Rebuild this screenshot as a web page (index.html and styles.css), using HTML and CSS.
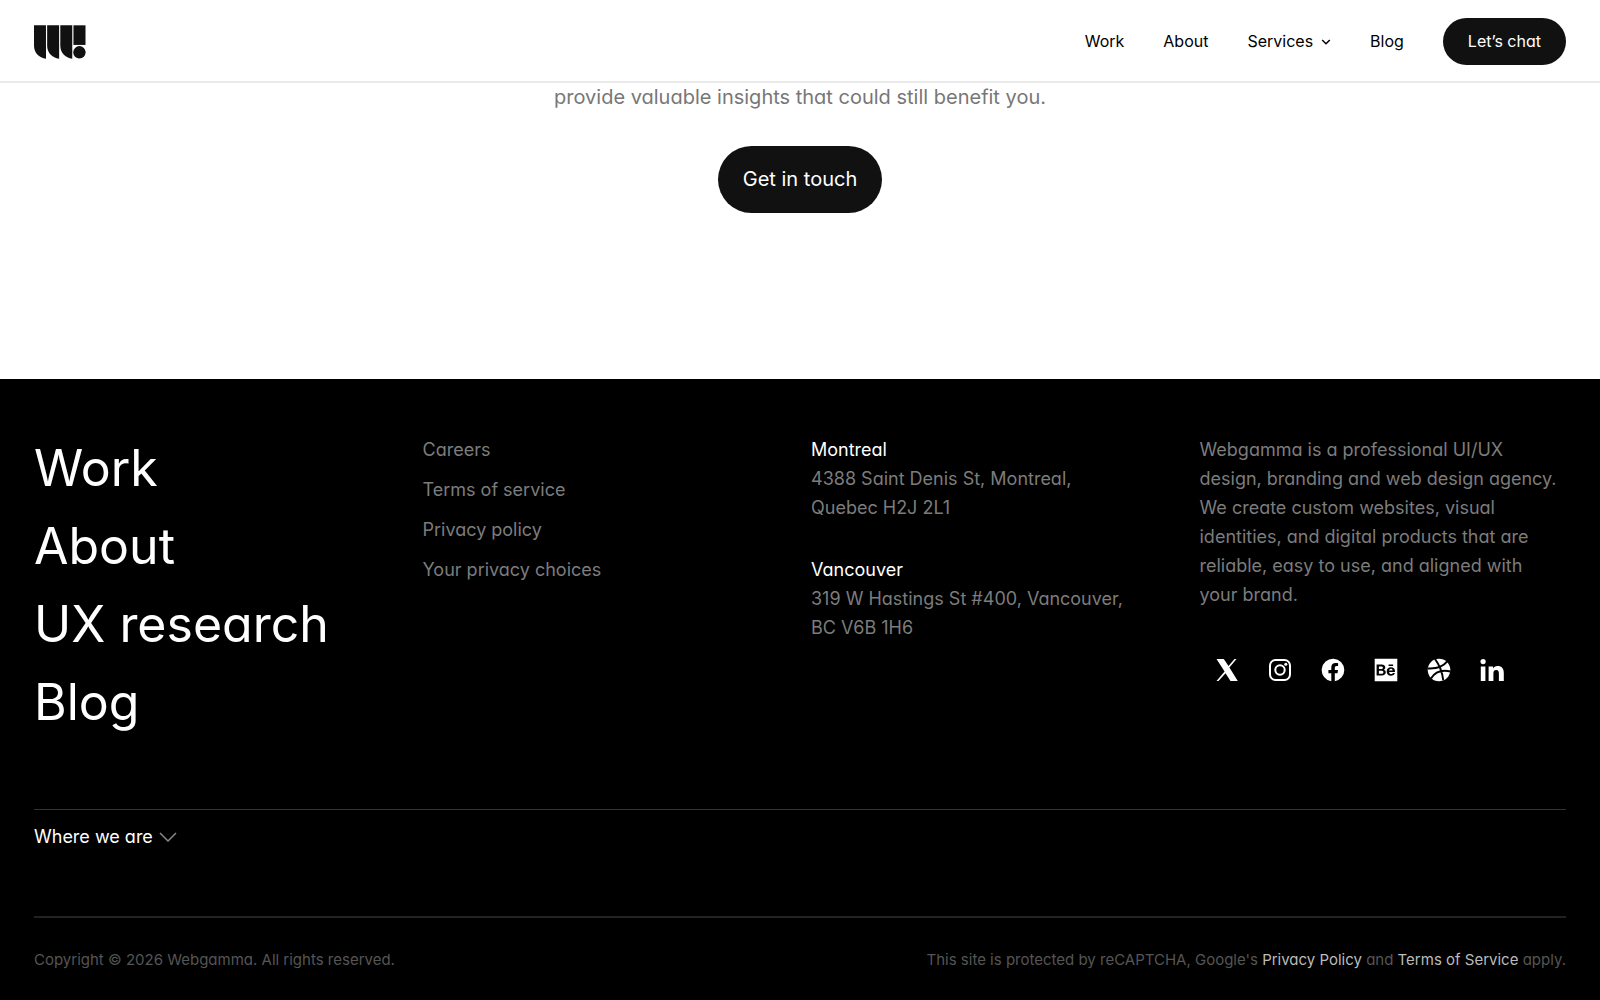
FILE: index.html
```html
<!DOCTYPE html>
<html lang="en">
<head>
    <meta charset="UTF-8" />
    <meta name="viewport" content="width=device-width, initial-scale=1" />
    <title>Webgamma</title>
    <link rel="stylesheet" href="styles.css">
</head>
<body>
    <header class="header">
        <a class="logo" href="#" aria-label="Webgamma">
            <svg width="52" height="34" viewBox="0 0 53 34">
                <path d="M0 0h12.2v34C5 33 0 28 0 20.500z" />
                <path d="M13.400 0h12.200v34c-7.200-1-12.200-6-12.200-13.500z" />
                <path d="M26.800 0h12.200v34c-7.200-1-12.200-6-12.200-13.500z" />
                <path d="M40.200 0h12.300v20H40.200z" />
                <circle cx="46.300" cy="27.500" r="6.300" />
            </svg>
        </a>
        <nav class="nav">
            <a href="#">Work</a>
            <a href="#">About</a>
            <a class="drop" href="#">Services
                <svg width="10" height="6" viewBox="0 0 10 6"><path d="M1.200 1l3.800 3.800L8.800 1" /></svg>
            </a>
            <a href="#">Blog</a>
            <a class="chat" href="#">Let’s chat</a>
        </nav>
    </header>

    <section class="contact">
        <p>provide valuable insights that could still benefit you.</p>
        <a class="touch" href="#">Get in touch</a>
    </section>

    <footer class="footer">
        <div class="columns">
            <ul class="main-links">
                <li><a href="#">Work</a></li>
                <li><a href="#">About</a></li>
                <li><a href="#">UX research</a></li>
                <li><a href="#">Blog</a></li>
            </ul>
            <ul class="sub-links">
                <li><a href="#">Careers</a></li>
                <li><a href="#">Terms of service</a></li>
                <li><a href="#">Privacy policy</a></li>
                <li><a href="#">Your privacy choices</a></li>
            </ul>
            <div class="offices">
                <address><b>Montreal</b><br>4388 Saint Denis St, Montreal,<br>Quebec H2J 2L1</address>
                <address><b>Vancouver</b><br>319 W Hastings St #400, Vancouver,<br>BC V6B 1H6</address>
            </div>
            <div class="about">
                <p>Webgamma is a professional UI/UX<br>design, branding and web design agency.<br>We create custom websites, visual<br>identities, and digital products that are<br>reliable, easy to use, and aligned with<br>your brand.</p>
                <div class="social">
                    <a href="#" aria-label="X">
                        <svg viewBox="0 0 24 24"><path d="M1.500 1h7.300l4.700 7L19.500 1h2l-7.100 8.500L22.800 23h-7.300l-5-7.800L3.500 23h-2l8.100-9.500z" /></svg>
                    </a>
                    <a href="#" aria-label="Instagram">
                        <svg viewBox="0 0 24 24"><rect class="line" x="2" y="2" width="20" height="20" rx="5.500" /><circle class="line" cx="12" cy="12" r="4.700" /><circle cx="17.800" cy="6.200" r="1.500" /></svg>
                    </a>
                    <a href="#" aria-label="Facebook">
                        <svg viewBox="0 0 24 24"><path d="M23.300 12a11.300 11.300 0 1 0-13 11.200v-7.900H7.400V12h2.900V9.500c0-2.900 1.700-4.400 4.300-4.400 1.200 0 2.500.2 2.500.2v2.800h-1.400c-1.400 0-1.900.9-1.900 1.800V12h3.200l-.5 3.300h-2.700v7.900A11.300 11.300 0 0 0 23.300 12z" /></svg>
                    </a>
                    <a href="#" aria-label="Behance">
                        <svg viewBox="0 0 24 24"><path fill-rule="evenodd" d="M.7.700h22.600v22.600H.7zM2.600 6.500v11h5.200c2.400 0 4-1.200 4-3.200 0-1.300-.7-2.200-1.900-2.600.9-.4 1.400-1.200 1.400-2.200 0-2-1.500-3-3.600-3zm2.300 1.900h2.300c1.100 0 1.700.4 1.700 1.300s-.6 1.300-1.600 1.300H4.900zm0 4.300h2.600c1.200 0 1.900.5 1.900 1.500s-.7 1.500-1.900 1.500H4.900zM14.600 6.500v1.500h4.500V6.500zM16.900 9.200c-2.600 0-4.200 1.800-4.200 4.300s1.600 4.200 4.300 4.200c2 0 3.300-.9 3.900-2.700h-2c-.2.600-.9 1-1.700 1-1.300 0-2-.7-2.100-2.100h5.900c.2-2.800-1.300-4.700-4.100-4.700zm-1.800 3.400c.1-1.100.8-1.800 1.800-1.800s1.600.6 1.800 1.800z" /></svg>
                    </a>
                    <a href="#" aria-label="Dribbble">
                        <svg viewBox="0 0 24 24"><circle cx="12" cy="12" r="11.300" /><path class="cut" d="M.5 10.400c7.500.5 15-1 19.700-7M4 20.500c3.800-6.200 10.500-9 19.500-7M8 1c4.500 6 7.300 13.200 8.300 21.500" /></svg>
                    </a>
                    <a href="#" aria-label="LinkedIn">
                        <svg viewBox="0 0 24 24"><path d="M.8 8.400h4.600V23H.8zM8.600 8.400H13v2c.8-1.400 2.300-2.400 4.500-2.400 4.500 0 6.300 2.700 6.300 7v8h-4.900v-7.300c0-2-.5-3.700-2.600-3.700-2.400 0-2.900 1.700-2.900 3.700V23H8.600z" /><circle cx="3.100" cy="3.600" r="2.600" /></svg>
                    </a>
                </div>
            </div>
        </div>

        <div class="where">
            <button type="button">Where we are
                <svg width="18" height="10" viewBox="0 0 18 10"><path d="M1 1l8 8 8-8" /></svg>
            </button>
        </div>

        <div class="legal">
            <p>Copyright © 2026 Webgamma. All rights reserved.</p>
            <p>This site is protected by reCAPTCHA, Google's <a href="#">Privacy Policy</a> and <a href="#">Terms of Service</a> apply.</p>
        </div>
    </footer>
</body>
</html>
```
FILE: styles.css
```css
* {
    margin: 0;
    padding: 0;
    box-sizing: border-box;
}

body {
    background-color: #fff;
    color: #111;
    font-family: Inter, "Liberation Sans", sans-serif;
    font-feature-settings: "cv11";      /* single-storey a */
    font-size: 18px;
    line-height: 29px;
}

a {
    color: inherit;
    text-decoration: none;
}

a:hover {
    text-decoration: underline;
}

ul {
    list-style: none;
}

svg {
    display: block;
    fill: currentColor;
}

/* header */
.header {
    display: flex;
    align-items: center;
    justify-content: space-between;
    padding: 18px 34px 16px;
    border-bottom: 2px solid #ebebeb;
}

.nav {
    display: flex;
    align-items: center;
    gap: 39px;
    color: #000;
    font-size: 16px;
}

.drop {
    display: flex;
    align-items: center;
    gap: 8px;
}

.drop svg,
.where svg {
    fill: none;
    stroke: currentColor;
    stroke-width: 1.5;
}

.chat {
    padding: 9px 25px;
    border-radius: 24px;
    background-color: #111;
    color: #fff;
}

/* contact */
.contact {
    display: flex;
    flex-direction: column;
    align-items: center;
    gap: 35px;
    padding-bottom: 166px;
    color: #777;
    font-size: 20px;
    line-height: 28px;
}

.touch {
    padding: 19px 25px 20px;
    border-radius: 34px;
    background-color: #111;
    color: #fff;
}

/* footer */
.footer {
    padding: 56px 34px 26px;
    background-color: #000;
    color: #7c7c7c;
}

.columns {
    display: grid;
    grid-template-columns: repeat(4, minmax(0, 1fr));
    gap: 22px;
    padding-bottom: 74px;
}

.main-links {
    display: grid;
    gap: 12px;
    color: #fff;
    font-size: 50px;
    line-height: 66px;
}

.sub-links {
    display: flex;
    flex-direction: column;
    gap: 11px;
}

.offices {
    display: flex;
    flex-direction: column;
    gap: 33px;
}

.offices address {
    font-style: normal;
}

.offices b {
    color: #fff;
    font-weight: 400;
}

.social {
    display: flex;
    margin-top: 34px;
    color: #fff;
}

.social a {
    padding: 15px 14px 15px 15px;
}

.social svg {
    width: 24px;
    height: 24px;
}

.social .line {
    fill: none;
    stroke: currentColor;
    stroke-width: 2;
}

.social .cut {
    fill: none;
    stroke: #000;
    stroke-width: 2;
}

.where {
    padding: 12px 0 65px;
    border-top: 1px solid #333;
    border-bottom: 2px solid #222;
}

.where button {
    display: flex;
    align-items: center;
    gap: 6px;
    border: 0;
    background: none;
    color: #fff;
    font: inherit;
    font-feature-settings: inherit;
    cursor: pointer;
}

.where svg {
    color: #888;
}

.legal {
    display: flex;
    justify-content: space-between;
    padding-top: 27px;
    color: #555;
    font-size: 15px;
}

.legal a {
    color: #bbb;
}
```
